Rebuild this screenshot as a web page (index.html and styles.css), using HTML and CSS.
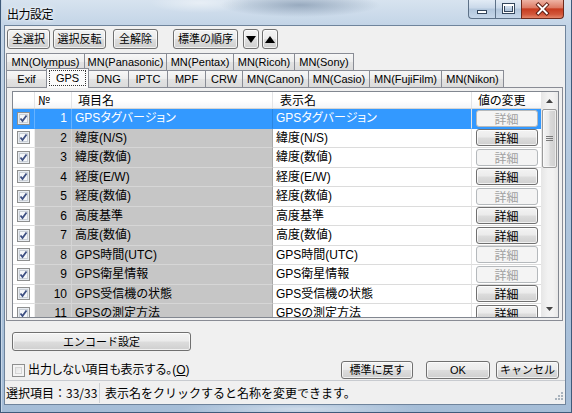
FILE: index.html
```html
<!DOCTYPE html>
<html lang="ja">
<head>
<meta charset="utf-8">
<title>出力設定</title>
<link rel="stylesheet" href="styles.css">
</head>
<body>
<div class="window">
  <div class="titlebar">
    <span class="title">出力設定</span>
    <div class="caption-btns">
      <span class="cap cap-min"><svg width="26" height="18" viewBox="0 0 26 18"><rect x="8.5" y="10.5" width="9" height="3" fill="#fff" stroke="#33455b"/></svg></span>
      <span class="cap cap-max"><svg width="25" height="18" viewBox="0 0 25 18"><rect x="7.5" y="4.5" width="10" height="8" fill="none" stroke="#33455b" stroke-width="3"/><rect x="7.5" y="4.5" width="10" height="8" fill="none" stroke="#fff" stroke-width="1"/><line x1="7.5" y1="5.5" x2="17.5" y2="5.5" stroke="#fff" stroke-width="1"/></svg></span>
      <span class="cap cap-close"><svg width="43" height="18" viewBox="0 0 43 18"><path d="M17 4.5 L26 13.5 M26 4.5 L17 13.5" stroke="#5a1a10" stroke-width="4" stroke-linecap="square"/><path d="M17 4.5 L26 13.5 M26 4.5 L17 13.5" stroke="#fff" stroke-width="2" stroke-linecap="square"/></svg></span>
    </div>
  </div>

  <div class="client">
    <div class="toolbar">
      <button class="btn tb w43">全選択</button>
      <button class="btn tb w53 ml3">選択反転</button>
      <button class="btn tb w45 ml7">全解除</button>
      <button class="btn tb w65 ml15">標準の順序</button>
      <button class="btn tb w16 ml5"><svg width="10" height="7" viewBox="0 0 10 7"><path d="M0 0 H10 L5 7 Z" fill="#000"/></svg></button>
      <button class="btn tb w16 ml3"><svg width="10" height="7" viewBox="0 0 10 7"><path d="M0 7 H10 L5 0 Z" fill="#000"/></svg></button>
    </div>

    <div class="tabs">
      <div class="tabrow">
        <span class="tab w79">MN(Olympus)</span>
        <span class="tab w83">MN(Panasonic)</span>
        <span class="tab w68">MN(Pentax)</span>
        <span class="tab w62">MN(Ricoh)</span>
        <span class="tab w60">MN(Sony)</span>
      </div>
      <div class="tabrow row2">
        <span class="tab w41">Exif</span>
        <span class="tab w43 active"><span class="focus">GPS</span></span>
        <span class="tab w41">DNG</span>
        <span class="tab w40">IPTC</span>
        <span class="tab w39">MPF</span>
        <span class="tab w38">CRW</span>
        <span class="tab w67">MN(Canon)</span>
        <span class="tab w62">MN(Casio)</span>
        <span class="tab w73">MN(FujiFilm)</span>
        <span class="tab w63">MN(Nikon)</span>
      </div>
    </div>

    <div class="panel">
      <div class="list">
        <div class="list-main">
          <div class="lhead">
            <span class="h h-chk"></span>
            <span class="h h-no">№</span>
            <span class="h h-name">項目名</span>
            <span class="h h-disp">表示名</span>
            <span class="h h-val">値の変更</span>
          </div>
          <div class="lbody">
            <div class="row sel">
              <span class="c c-chk"><svg class="cbx" width="13" height="13" viewBox="0 0 13 13"><rect x="0.5" y="0.5" width="12" height="12" fill="#e9edf2" stroke="#8e8f8f"/><rect x="2.5" y="2.5" width="8" height="8" fill="#f4f6f9" stroke="#c9cfd6"/><path d="M3.5 6.5 L5.5 9 L9.5 3.5" fill="none" stroke="#3d4f82" stroke-width="1.8"/></svg></span>
              <span class="c c-no">1</span>
              <span class="c c-name">GPSタグバージョン</span>
              <span class="c c-disp">GPSタグバージョン</span>
              <span class="c c-val"><span class="dbtn off">詳細</span></span>
            </div>
            <div class="row">
              <span class="c c-chk"><svg class="cbx" width="13" height="13" viewBox="0 0 13 13"><rect x="0.5" y="0.5" width="12" height="12" fill="#e9edf2" stroke="#8e8f8f"/><rect x="2.5" y="2.5" width="8" height="8" fill="#f4f6f9" stroke="#c9cfd6"/><path d="M3.5 6.5 L5.5 9 L9.5 3.5" fill="none" stroke="#3d4f82" stroke-width="1.8"/></svg></span>
              <span class="c c-no">2</span>
              <span class="c c-name">緯度(N/S)</span>
              <span class="c c-disp">緯度(N/S)</span>
              <span class="c c-val"><span class="dbtn">詳細</span></span>
            </div>
            <div class="row">
              <span class="c c-chk"><svg class="cbx" width="13" height="13" viewBox="0 0 13 13"><rect x="0.5" y="0.5" width="12" height="12" fill="#e9edf2" stroke="#8e8f8f"/><rect x="2.5" y="2.5" width="8" height="8" fill="#f4f6f9" stroke="#c9cfd6"/><path d="M3.5 6.5 L5.5 9 L9.5 3.5" fill="none" stroke="#3d4f82" stroke-width="1.8"/></svg></span>
              <span class="c c-no">3</span>
              <span class="c c-name">緯度(数値)</span>
              <span class="c c-disp">緯度(数値)</span>
              <span class="c c-val"><span class="dbtn off">詳細</span></span>
            </div>
            <div class="row">
              <span class="c c-chk"><svg class="cbx" width="13" height="13" viewBox="0 0 13 13"><rect x="0.5" y="0.5" width="12" height="12" fill="#e9edf2" stroke="#8e8f8f"/><rect x="2.5" y="2.5" width="8" height="8" fill="#f4f6f9" stroke="#c9cfd6"/><path d="M3.5 6.5 L5.5 9 L9.5 3.5" fill="none" stroke="#3d4f82" stroke-width="1.8"/></svg></span>
              <span class="c c-no">4</span>
              <span class="c c-name">経度(E/W)</span>
              <span class="c c-disp">経度(E/W)</span>
              <span class="c c-val"><span class="dbtn">詳細</span></span>
            </div>
            <div class="row">
              <span class="c c-chk"><svg class="cbx" width="13" height="13" viewBox="0 0 13 13"><rect x="0.5" y="0.5" width="12" height="12" fill="#e9edf2" stroke="#8e8f8f"/><rect x="2.5" y="2.5" width="8" height="8" fill="#f4f6f9" stroke="#c9cfd6"/><path d="M3.5 6.5 L5.5 9 L9.5 3.5" fill="none" stroke="#3d4f82" stroke-width="1.8"/></svg></span>
              <span class="c c-no">5</span>
              <span class="c c-name">経度(数値)</span>
              <span class="c c-disp">経度(数値)</span>
              <span class="c c-val"><span class="dbtn off">詳細</span></span>
            </div>
            <div class="row">
              <span class="c c-chk"><svg class="cbx" width="13" height="13" viewBox="0 0 13 13"><rect x="0.5" y="0.5" width="12" height="12" fill="#e9edf2" stroke="#8e8f8f"/><rect x="2.5" y="2.5" width="8" height="8" fill="#f4f6f9" stroke="#c9cfd6"/><path d="M3.5 6.5 L5.5 9 L9.5 3.5" fill="none" stroke="#3d4f82" stroke-width="1.8"/></svg></span>
              <span class="c c-no">6</span>
              <span class="c c-name">高度基準</span>
              <span class="c c-disp">高度基準</span>
              <span class="c c-val"><span class="dbtn">詳細</span></span>
            </div>
            <div class="row">
              <span class="c c-chk"><svg class="cbx" width="13" height="13" viewBox="0 0 13 13"><rect x="0.5" y="0.5" width="12" height="12" fill="#e9edf2" stroke="#8e8f8f"/><rect x="2.5" y="2.5" width="8" height="8" fill="#f4f6f9" stroke="#c9cfd6"/><path d="M3.5 6.5 L5.5 9 L9.5 3.5" fill="none" stroke="#3d4f82" stroke-width="1.8"/></svg></span>
              <span class="c c-no">7</span>
              <span class="c c-name">高度(数値)</span>
              <span class="c c-disp">高度(数値)</span>
              <span class="c c-val"><span class="dbtn">詳細</span></span>
            </div>
            <div class="row">
              <span class="c c-chk"><svg class="cbx" width="13" height="13" viewBox="0 0 13 13"><rect x="0.5" y="0.5" width="12" height="12" fill="#e9edf2" stroke="#8e8f8f"/><rect x="2.5" y="2.5" width="8" height="8" fill="#f4f6f9" stroke="#c9cfd6"/><path d="M3.5 6.5 L5.5 9 L9.5 3.5" fill="none" stroke="#3d4f82" stroke-width="1.8"/></svg></span>
              <span class="c c-no">8</span>
              <span class="c c-name">GPS時間(UTC)</span>
              <span class="c c-disp">GPS時間(UTC)</span>
              <span class="c c-val"><span class="dbtn off">詳細</span></span>
            </div>
            <div class="row">
              <span class="c c-chk"><svg class="cbx" width="13" height="13" viewBox="0 0 13 13"><rect x="0.5" y="0.5" width="12" height="12" fill="#e9edf2" stroke="#8e8f8f"/><rect x="2.5" y="2.5" width="8" height="8" fill="#f4f6f9" stroke="#c9cfd6"/><path d="M3.5 6.5 L5.5 9 L9.5 3.5" fill="none" stroke="#3d4f82" stroke-width="1.8"/></svg></span>
              <span class="c c-no">9</span>
              <span class="c c-name">GPS衛星情報</span>
              <span class="c c-disp">GPS衛星情報</span>
              <span class="c c-val"><span class="dbtn off">詳細</span></span>
            </div>
            <div class="row">
              <span class="c c-chk"><svg class="cbx" width="13" height="13" viewBox="0 0 13 13"><rect x="0.5" y="0.5" width="12" height="12" fill="#e9edf2" stroke="#8e8f8f"/><rect x="2.5" y="2.5" width="8" height="8" fill="#f4f6f9" stroke="#c9cfd6"/><path d="M3.5 6.5 L5.5 9 L9.5 3.5" fill="none" stroke="#3d4f82" stroke-width="1.8"/></svg></span>
              <span class="c c-no">10</span>
              <span class="c c-name">GPS受信機の状態</span>
              <span class="c c-disp">GPS受信機の状態</span>
              <span class="c c-val"><span class="dbtn">詳細</span></span>
            </div>
            <div class="row">
              <span class="c c-chk"><svg class="cbx" width="13" height="13" viewBox="0 0 13 13"><rect x="0.5" y="0.5" width="12" height="12" fill="#e9edf2" stroke="#8e8f8f"/><rect x="2.5" y="2.5" width="8" height="8" fill="#f4f6f9" stroke="#c9cfd6"/><path d="M3.5 6.5 L5.5 9 L9.5 3.5" fill="none" stroke="#3d4f82" stroke-width="1.8"/></svg></span>
              <span class="c c-no">11</span>
              <span class="c c-name">GPSの測定方法</span>
              <span class="c c-disp">GPSの測定方法</span>
              <span class="c c-val"><span class="dbtn">詳細</span></span>
            </div>
          </div>
        </div>
        <div class="vscroll">
          <span class="sarrow"><svg width="7" height="4" viewBox="0 0 7 4"><path d="M0 4 H7 L3.5 0 Z" fill="#444"/></svg></span>
          <span class="thumb"><svg width="7" height="7" viewBox="0 0 7 7"><path d="M0 1.5 H7 M0 3.5 H7 M0 5.5 H7" stroke="#7a7a7a" stroke-width="1"/></svg></span>
          <span class="track"></span>
          <span class="sarrow"><svg width="7" height="4" viewBox="0 0 7 4"><path d="M0 0 H7 L3.5 4 Z" fill="#444"/></svg></span>
        </div>
      </div>
    </div>

    <button class="btn encode">エンコード設定</button>

    <div class="footer">
      <label class="chk"><span class="cb"></span>出力しない項目も表示する。(<u>O</u>)</label>
      <div class="actions">
        <button class="btn fb w72">標準に戻す</button>
        <button class="btn fb w64 ml13">OK</button>
        <button class="btn fb w63 ml6">キャンセル</button>
      </div>
    </div>

    <div class="status">
      <span class="st1">選択項目：33/33</span>
      <span class="st2">表示名をクリックすると名称を変更できます。</span>
      <svg class="grip" width="11" height="11" viewBox="0 0 11 11"><g fill="#a9b3bd"><rect x="8" y="0" width="2" height="2"/><rect x="5" y="3" width="2" height="2"/><rect x="8" y="3" width="2" height="2"/><rect x="2" y="6" width="2" height="2"/><rect x="5" y="6" width="2" height="2"/><rect x="8" y="6" width="2" height="2"/></g></svg>
    </div>
  </div>
</div>
</body>
</html>
```

FILE: styles.css
```css
* { box-sizing: border-box; margin: 0; padding: 0; }
html, body { width: 572px; height: 413px; overflow: hidden; }
body {
  font-family: "Liberation Sans", "Noto Sans CJK JP", sans-serif;
  font-size: 12px;
  color: #000;
  background: #a9c0d8;
}
button { font-family: inherit; color: #000; cursor: default; }

.window {
  width: 572px;
  height: 413px;
  display: flex;
  flex-direction: column;
  padding: 0 6px 8px 4px;
  background:
    radial-gradient(ellipse 80px 12px at 300px 5px, rgba(80,104,134,.45), transparent),
    radial-gradient(ellipse 50px 10px at 200px 3px, rgba(255,255,255,.45), transparent),
    radial-gradient(ellipse 120px 8px at 300px 409px, rgba(255,255,255,.45), transparent),
    linear-gradient(180deg, #d7e3ef 0, #c4d5e7 24px, #b1c7de 45%, #a5bdd7 100%);
  box-shadow: inset 1px 0 0 #3f5a7a, inset -1px 0 0 #3f5a7a, inset 0 -1px 0 #3f5a7a, inset 2px 0 0 #c9d8e8;
}

/* title bar */
.titlebar { height: 25px; display: flex; align-items: flex-start; }
.title {
  padding: 5px 0 0 3px;
  line-height: 18px;
  font-size: 12px;
  font-family: "Noto Sans CJK JP", sans-serif;
  letter-spacing: -0.5px;
  text-shadow: 0 0 6px #fff, 0 0 3px #fff;
}
.caption-btns { margin-left: auto; margin-right: 2px; display: flex; height: 19px; }
.cap { display: flex; height: 19px; border: 1px solid #5d7188; border-top: none; }
.cap svg { display: block; }
.cap-min {
  width: 27px; border-bottom-left-radius: 4px; border-right: none;
  background: linear-gradient(180deg, #e2ebf5 0, #c9d8e9 45%, #b2c6dc 50%, #c6d7ea 100%);
}
.cap-max {
  width: 26px; border-right: none;
  background: linear-gradient(180deg, #e2ebf5 0, #c9d8e9 45%, #b2c6dc 50%, #c6d7ea 100%);
}
.cap-close {
  width: 43px; border-bottom-right-radius: 4px; border-color: #6e2a1c;
  background: linear-gradient(180deg, #eeb3a4 0, #dd7c66 42%, #c73b1f 50%, #d2573a 80%, #e4866a 100%);
}

/* client */
.client {
  flex: 1;
  display: flex;
  flex-direction: column;
  background: #f0f0f0;
  border: 1px solid #6f849c;
  font-family: "Liberation Sans", "Noto Sans CJK JP", sans-serif;
  font-feature-settings: "palt";
}

.btn {
  display: flex;
  align-items: center;
  justify-content: center;
  border: 1px solid #707070;
  border-radius: 3px;
  background: linear-gradient(180deg, #f3f3f3 0, #ebebeb 48%, #dddddd 52%, #cfcfcf 100%);
  box-shadow: inset 0 0 0 1px rgba(255,255,255,.7);
  font-size: 11px;
  line-height: 14px;
}

.toolbar { display: flex; margin: 3px 0 0 2px; height: 20px; }
.tb { height: 20px; }

.w16 { width: 16px; } .w38 { width: 38px; } .w39 { width: 39px; } .w40 { width: 40px; }
.w41 { width: 41px; } .w43 { width: 43px; } .w45 { width: 45px; } .w53 { width: 53px; }
.w60 { width: 60px; } .w62 { width: 62px; } .w63 { width: 63px; } .w64 { width: 64px; }
.w65 { width: 65px; } .w67 { width: 67px; } .w68 { width: 68px; } .w72 { width: 72px; }
.w73 { width: 73px; } .w79 { width: 79px; } .w83 { width: 83px; }
.ml3 { margin-left: 3px; } .ml5 { margin-left: 5px; } .ml6 { margin-left: 6px; }
.ml7 { margin-left: 7px; } .ml13 { margin-left: 13px; } .ml15 { margin-left: 15px; }

/* tabs */
.tabs { margin: 4px 0 0 1px; display: flex; flex-direction: column; position: relative; z-index: 1; }
.tabrow { display: flex; height: 17px; }
.tabrow.row2 { height: 18px; margin-bottom: -1px; align-items: flex-start; }
.tab {
  height: 17px;
  margin-right: -1px;
  border: 1px solid #898c95;
  border-bottom: none;
  background: linear-gradient(180deg, #f7f7f7 0, #ededed 50%, #e3e3e3 51%, #dbdbdb 100%);
  font-family: "Liberation Sans", sans-serif;
  font-size: 11px;
  line-height: 16px;
  text-align: center;
  white-space: nowrap;
  color: #000;
}
.tab.active {
  position: relative;
  z-index: 2;
  height: 20px;
  margin-top: -2px;
  background: #fbfbfb;
  padding: 1px 2px 0;
}
.focus {
  display: block;
  border: 1px dotted #333;
  line-height: 14px;
  height: 16px;
}

/* panel */
.panel {
  height: 234px;
  margin: 0 2px 0 1px;
  border: 1px solid #898c95;
  padding: 3px 3px 2px 5px;
  background: #f0f0f0;
  position: relative;
  z-index: 0;
}
.list {
  height: 227px;
  border: 1px solid #828790;
  background: #fff;
  display: flex;
}
.list-main { width: 528px; display: flex; flex-direction: column; }
.lhead, .row {
  display: grid;
  grid-template-columns: 22px 37px 201px 199px 69px;
}
.lhead {
  height: 17px;
  background: linear-gradient(180deg, #ffffff 0, #ffffff 55%, #f4f5f7 100%);
  border-bottom: 1px solid #d5d5d5;
}
.h {
  border-right: 1px solid #e3e4e6;
  line-height: 16px;
  font-size: 12px;
  font-family: "Noto Sans CJK JP", sans-serif;
  white-space: nowrap;
}
.h-no { padding-left: 3px; }
.h-name { padding-left: 6px; }
.h-disp { padding-left: 7px; }
.h-val { padding-left: 6px; border-right: none; }

.lbody { flex: 1; overflow: hidden; }
.row { height: 19.5px; }
.c {
  border-bottom: 1px solid #dcdcdc;
  line-height: 18.5px;
  white-space: nowrap;
  overflow: hidden;
  font-size: 12px;
}
.c-chk { background: #fff; display: flex; align-items: center; justify-content: center; border-right: 1px solid #eeeeee; }
.cbx { display: block; }
.c-no { background: #c6c6c6; text-align: right; padding-right: 4px; border-right: 1px solid #d4d4d4; border-bottom-color: #d6d6d6; }
.c-name { background: #c6c6c6; padding-left: 3px; border-right: 1px solid #a9a9a9; border-bottom-color: #d6d6d6; }
.c-disp { background: #fff; padding-left: 3px; border-right: 1px solid #e4e4e4; }
.c-val { background: #fff; display: flex; align-items: center; justify-content: center; }

.row.sel .c { background: #3399ff; color: #fff; border-bottom-color: #3399ff; }
.row.sel .c-no, .row.sel .c-chk { border-right-color: #66b2ff; }
.row.sel .c-name { border-right-color: #2a86e0; }

.dbtn {
  width: 62px;
  height: 17px;
  display: flex;
  align-items: center;
  justify-content: center;
  border: 1px solid #707070;
  border-radius: 3px;
  background: linear-gradient(180deg, #f3f3f3 0, #ebebeb 48%, #dddddd 52%, #cfcfcf 100%);
  box-shadow: inset 0 0 0 1px rgba(255,255,255,.7);
  color: #000;
  font-size: 12px;
  font-family: "Noto Sans CJK JP", sans-serif;
  line-height: 15px;
}
.dbtn.off {
  border-color: #b5b9bc;
  background: #f4f4f4;
  box-shadow: none;
  color: #a0a0a0;
}

/* scrollbar */
.vscroll {
  width: 17px;
  display: flex;
  flex-direction: column;
  background: linear-gradient(90deg, #e6e6e6 0, #f2f2f2 40%, #f2f2f2 70%, #e8e8e8 100%);
}
.sarrow { height: 17px; display: flex; align-items: center; justify-content: center; }
.thumb {
  height: 59px;
  margin: 0 1px;
  border: 1px solid #9a9a9a;
  border-radius: 2px;
  background: linear-gradient(90deg, #f4f4f4 0, #e9e9e9 45%, #d9d9d9 55%, #cfcfcf 100%);
  box-shadow: inset 0 0 0 1px rgba(255,255,255,.6);
  display: flex;
  align-items: center;
  justify-content: center;
}
.track { flex: 1; }

/* bottom */
.encode { width: 179px; height: 19px; margin: 11px 0 0 7px; font-size: 11px; }

.footer {
  margin-top: 10px;
  height: 18px;
  display: flex;
  align-items: center;
  padding: 0 6px 0 7px;
}
.chk { display: flex; align-items: center; font-size: 12px; line-height: 16px; }
.cb {
  width: 13px; height: 13px;
  margin-right: 3px;
  border: 1px solid #8e8f8f;
  background: linear-gradient(135deg, #dcdcdc 0, #ffffff 100%);
  box-shadow: inset 0 0 0 2px #f4f4f4, inset 0 0 0 3px #d5d5d5;
}
.chk u { text-decoration: underline; }
.actions { margin-left: auto; display: flex; }
.fb { height: 18px; }

.status {
  margin-top: 1px;
  height: 24px;
  border-top: 1px solid #c8cbd0;
  display: flex;
  align-items: center;
  font-family: "Noto Sans CJK JP", sans-serif;
  font-feature-settings: normal;
  font-size: 12px;
  line-height: 16px;
}
.st1 { width: 95px; padding-left: 1px; height: 20px; line-height: 20px; border-right: 1px solid #cdd0d4; white-space: nowrap; }
.st2 { padding-left: 5px; white-space: nowrap; }
.grip { margin-left: auto; align-self: flex-end; margin-bottom: 1px; margin-right: 1px; }
```
